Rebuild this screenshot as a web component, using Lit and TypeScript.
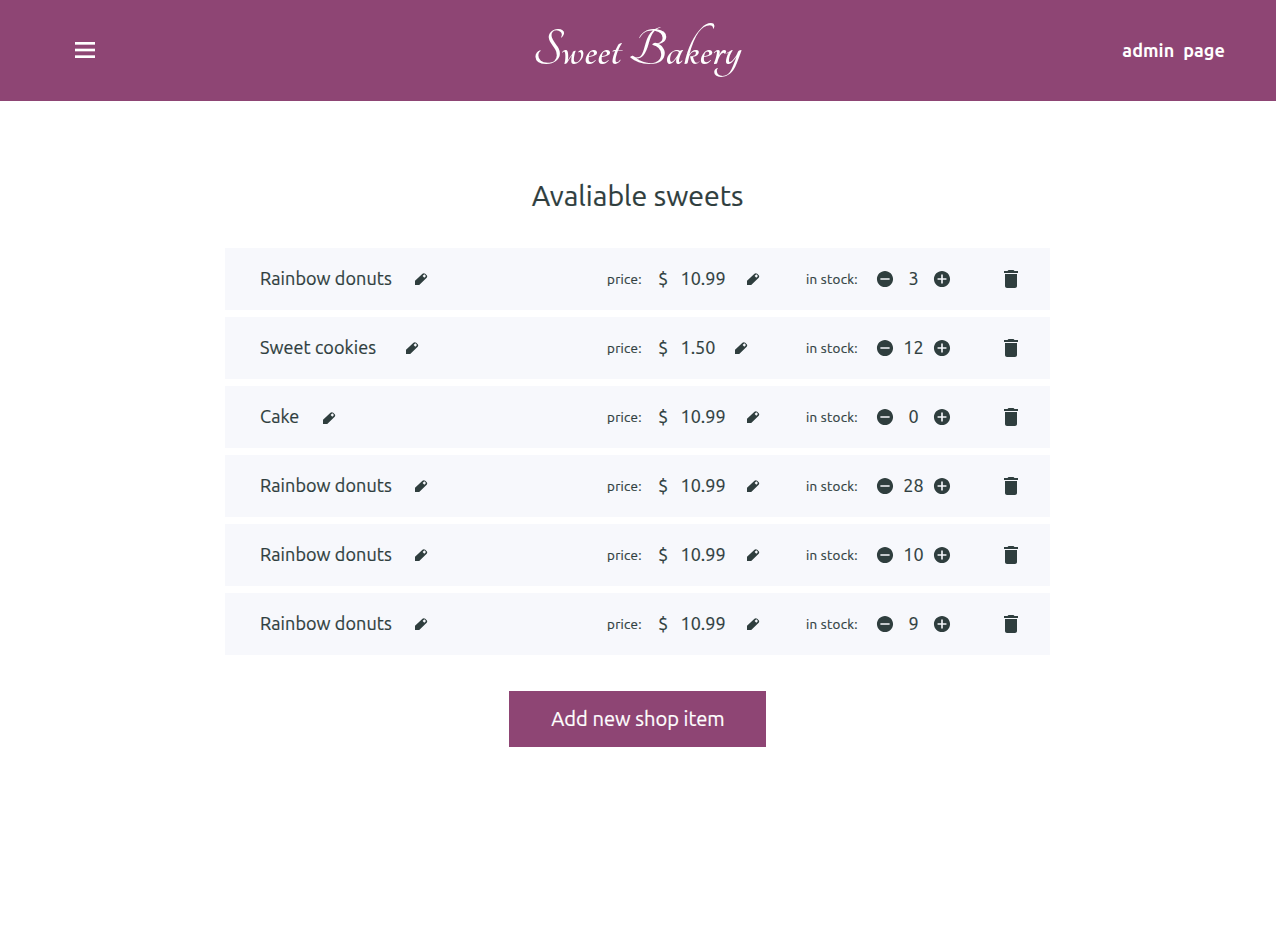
import { LitElement, html, css, svg } from "lit";
import { customElement, property } from "lit/decorators.js";

interface Sweet {
  name: string;
  nameWidth: number;
  price: string;
  priceWidth: number;
  stock: number;
}

const donuts = { name: "Rainbow donuts", nameWidth: 155, price: "10.99", priceWidth: 66.5 };

const SWEETS: Sweet[] = [
  { ...donuts, stock: 3 },
  { name: "Sweet cookies", nameWidth: 146, price: "1.50", priceWidth: 54.5, stock: 12 },
  { ...donuts, name: "Cake", nameWidth: 63, stock: 0 },
  { ...donuts, stock: 28 },
  { ...donuts, stock: 10 },
  { ...donuts, stock: 9 },
];

const minus = svg`<path d="M12 2C6.48 2 2 6.48 2 12s4.48 10 10 10 10-4.48 10-10S17.52 2 12 2zm5.7 11H6.3v-2h11.4v2z"/>`;
const plus = svg`<path d="M12 2C6.48 2 2 6.48 2 12s4.48 10 10 10 10-4.48 10-10S17.52 2 12 2zm5.5 11H13v4.5h-2V13H6.5v-2H11V6.5h2V11h4.5v2z"/>`;

@customElement("sweet-row")
export class SweetRow extends LitElement {
  @property({ attribute: false }) item!: Sweet;

  static styles = css`
    :host {
      display: grid;
      grid-template-columns: 347px 199px 193px 1fr;
      align-items: center;
      box-sizing: border-box;
      height: 62px;
      padding-left: 35px;
      background: #f7f8fc;
      color: #2f3e3e;
    }
    .cell { display: flex; align-items: center; }
    .text { font-size: 18px; line-height: 24px; white-space: nowrap; padding-bottom: 2px; }
    .name { letter-spacing: 0.08px; }
    .label {
      font-size: 13.4px;
      letter-spacing: 0.3px;
      line-height: 20px;
      white-space: nowrap;
      padding-top: 1px;
    }
    .price-label { width: 51px; }
    .currency { width: 22.5px; }
    .stock-label { width: 69px; }
    .count { width: 37px; text-align: center; }
    button {
      display: flex;
      padding: 0;
      border: 0;
      background: none;
      color: inherit;
    }
    svg { display: block; fill: currentColor; }
    .low { padding-top: 1px; }
  `;

  private pencil(low = false) {
    return html`<button class=${low ? "low" : ""} aria-label="Edit">
      <svg width="13" height="12" viewBox="0 0 13 12">
        <path fill-rule="evenodd" d="M0 12V7.8L7.5.8Q8.8 -.4 10.2.8L11.7 2.3Q12.7 3.5 11.7 4.7L4.2 12ZM9.3 1.3L7.6 3L9.3 4.7L11 3Z"/>
      </svg>
    </button>`;
  }

  private round(shape: unknown, label: string) {
    return html`<button aria-label=${label}>
      <svg width="20" height="20" viewBox="-.4 -.4 24.8 24.8">${shape}</svg>
    </button>`;
  }

  render() {
    const { name, nameWidth, price, priceWidth, stock } = this.item;
    return html`
      <div class="cell">
        <span class="text name" style="width:${nameWidth}px">${name}</span>
        ${this.pencil(name === "Cake")}
      </div>
      <div class="cell">
        <span class="label price-label">price:</span>
        <span class="text currency">$</span>
        <span class="text" style="width:${priceWidth}px">${price}</span>
        ${this.pencil()}
      </div>
      <div class="cell">
        <span class="label stock-label">in stock:</span>
        ${this.round(minus, "Less")}
        <span class="text count">${stock}</span>
        ${this.round(plus, "More")}
      </div>
      <div>
        <button aria-label="Delete">
          <svg width="24" height="24" viewBox="0 0 24 24">
            <path d="M6 19c0 1.1.9 2 2 2h8c1.1 0 2-.9 2-2V7H6v12zM19 4h-3.5l-1-1h-5l-1 1H5v2h14V4z"/>
          </svg>
        </button>
      </div>
    `;
  }
}

@customElement("app-root")
export class AppRoot extends LitElement {
  static styles = css`
    :host {
      display: block;
      min-height: 934px;
      background: #fff;
      color: #2f3e3e;
      font-family: Ubuntu, "Noto Sans", sans-serif;
      -webkit-text-stroke: 0.2px;
    }
    header {
      display: grid;
      grid-template-columns: 1fr auto 1fr;
      align-items: center;
      box-sizing: border-box;
      height: 101px;
      padding: 0 51px 0 75px;
      background: #8e4574;
      color: #fff;
    }
    .menu { display: block; fill: #fff; margin-top: -1px; }
    .logo {
      font-family: Tangerine, "Liberation Serif", serif;
      font-weight: 700;
      font-size: 55px;
      line-height: 60px;
      white-space: nowrap;
      margin-right: 26px;
      -webkit-text-stroke: 0;
    }
    .admin {
      justify-self: end;
      padding-bottom: 1px;
      font-size: 18px;
      font-weight: 700;
      word-spacing: 4.5px;
      letter-spacing: 0.08px;
      white-space: nowrap;
      -webkit-text-stroke: 0;
    }
    main { display: flex; flex-direction: column; align-items: center; padding-right: 1px; }
    h1 {
      margin: 74px 0 33px;
      font-size: 28.5px;
      font-weight: 400;
      line-height: 40px;
    }
    .list { display: grid; gap: 7px; width: 825px; }
    .add {
      margin-top: 36px;
      width: 257px;
      height: 56px;
      padding: 0 0 2px 1px;
      border: 0;
      background: #8e4574;
      color: #fff;
      font-family: inherit;
      font-size: 20.1px;
    }
  `;

  render() {
    return html`
      <header>
        <svg class="menu" width="20" height="16" viewBox="0 0 20 16">
          <rect width="20" height="2.67" />
          <rect y="6.67" width="20" height="2.67" />
          <rect y="13.33" width="20" height="2.67" />
        </svg>
        <div class="logo">Sweet Bakery</div>
        <div class="admin">admin page</div>
      </header>
      <main>
        <h1>Avaliable sweets</h1>
        <div class="list">${SWEETS.map((item) => html`<sweet-row .item=${item}></sweet-row>`)}</div>
        <button class="add">Add new shop item</button>
      </main>
    `;
  }
}
